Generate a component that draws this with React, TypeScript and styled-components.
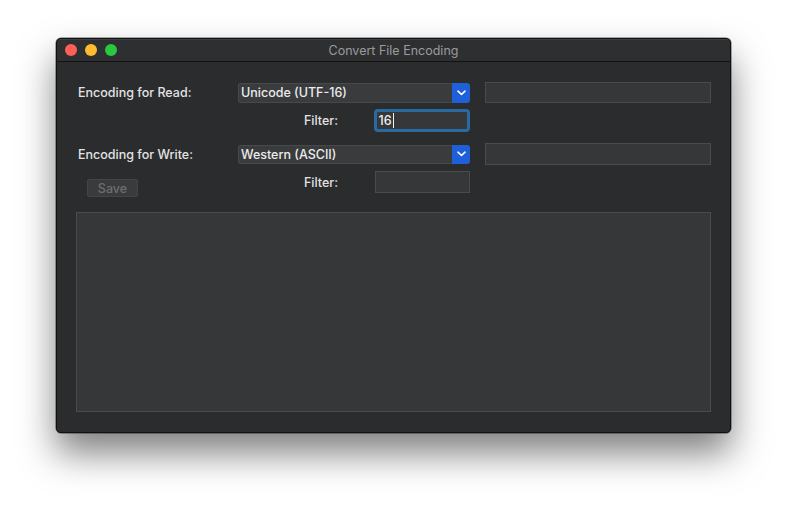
import React from "react";
import styled, { createGlobalStyle } from "styled-components";

const Global = createGlobalStyle`
  html, body { margin: 0; padding: 0; background: #ffffff; }
  body { font-family: Inter, "Liberation Sans", sans-serif; -webkit-font-smoothing: antialiased; }
`;

const Page = styled.div`
  width: 787px;
  height: 507px;
  padding: 38px 0 0 56px;
  box-sizing: border-box;
`;

const Window = styled.div`
  width: 675px;
  height: 395px;
  background: #2b2c2e;
  border-radius: 5px;
  border: 1px solid #111;
  box-sizing: border-box;
  box-shadow: 0 20px 36px rgba(0, 0, 0, 0.5), 0 0 0 0.5px rgba(0, 0, 0, 0.6);
  display: flex;
  flex-direction: column;
  overflow: hidden;
`;

const TitleBar = styled.div`
  height: 22px;
  flex: none;
  position: relative;
  display: flex;
  align-items: center;
  justify-content: center;
  background: #2e2f31;
  border-bottom: 1px solid #121212;
  box-shadow: inset 0 1px 0 rgba(255, 255, 255, 0.08);
`;

const Lights = styled.div`
  position: absolute;
  left: 8px;
  top: 5px;
  display: flex;
  gap: 8px;
`;

const Light = styled.span<{ $c: string }>`
  width: 12px;
  height: 12px;
  border-radius: 50%;
  background: ${(p) => p.$c};
`;

const Title = styled.div`
  font-size: 12.5px;
  color: #9b9b9c;
`;

const Content = styled.div`
  flex: 1;
  padding: 20px 19px 20px 19px;
  display: flex;
  flex-direction: column;
`;

const Grid = styled.div`
  display: grid;
  grid-template-columns: 162px 232px 15px 226px;
  align-items: center;
`;

const Label = styled.div`
  font-size: 12.5px;
  font-weight: 500;
  color: #e2e2e2;
  padding-left: 2px;
`;

const Popup = styled.div<{ $h: number }>`
  height: ${(p) => p.$h}px;
  display: flex;
  border-radius: 3px;
  overflow: hidden;
  background: #3a3b3d;
  box-shadow: inset 0 0 0 1px #48494b;
`;

const PopupText = styled.div`
  flex: 1;
  font-size: 12.5px;
  font-weight: 500;
  color: #ececec;
  padding-left: 3px;
  display: flex;
  align-items: center;
`;

const PopupArrow = styled.div`
  width: 18px;
  background: #1f5fd9;
  display: flex;
  align-items: center;
  justify-content: center;
  border-radius: 0 3px 3px 0;
`;

const Field = styled.div<{ $h: number; $w?: number }>`
  height: ${(p) => p.$h}px;
  ${(p) => (p.$w ? `width: ${p.$w}px;` : "")}
  box-sizing: border-box;
  background: #363739;
  border: 1px solid #4a4b4d;
`;

const FocusField = styled.div`
  width: 97px;
  height: 23px;
  box-sizing: border-box;
  background: #363739;
  border: 3px solid #2a6aa3;
  border-radius: 4px;
  display: flex;
  align-items: center;
  padding-left: 2px;
  font-size: 12.5px;
  font-weight: 500;
  color: #f0f0f0;
`;

const Caret = styled.span`
  display: inline-block;
  width: 1px;
  height: 15px;
  background: #f0f0f0;
  margin-left: 1px;
`;

const FilterRow = styled.div<{ $mt: number }>`
  grid-column: 2;
  display: flex;
  align-items: center;
  margin-top: ${(p) => p.$mt}px;
`;

const FilterLabel = styled.div<{ $w: number }>`
  width: ${(p) => p.$w}px;
  padding-left: 66px;
  box-sizing: border-box;
  font-size: 12.5px;
  font-weight: 500;
  color: #e2e2e2;
`;

const SaveCell = styled.div`
  grid-column: 1;
  align-self: start;
  margin: 14px 0 -4px;
  padding-left: 11px;
`;

const SaveButton = styled.div`
  width: 51px;
  height: 18px;
  border-radius: 3px;
  background: #3a3b3d;
  box-shadow: inset 0 0 0 1px #444547;
  color: #6d6e70;
  font-size: 12.5px;
  font-weight: 500;
  display: flex;
  align-items: center;
  justify-content: center;
`;

const Cell = styled.div<{ $mt?: number; $col?: number }>`
  ${(p) => (p.$col ? `grid-column: ${p.$col};` : "")}
  margin-top: ${(p) => p.$mt ?? 0}px;
`;

const TextArea = styled.div`
  margin-top: 19px;
  flex: 1;
  background: #363739;
  border: 1px solid #4a4b4d;
`;

const Chevron = () => (
  <svg width="9" height="6" viewBox="0 0 9 6">
    <path d="M1 1.2 L4.5 4.5 L8 1.2" fill="none" stroke="#ffffff" strokeWidth="1.6" strokeLinecap="round" strokeLinejoin="round" />
  </svg>
);

export default function App() {
  return (
    <>
      <Global />
      <Page>
        <Window>
          <TitleBar>
            <Lights>
              <Light $c="#fe5f57" />
              <Light $c="#febc2e" />
              <Light $c="#28c840" />
            </Lights>
            <Title>Convert File Encoding</Title>
          </TitleBar>
          <Content>
            <Grid>
              <Label>Encoding for Read:</Label>
              <Popup $h={20}>
                <PopupText>Unicode (UTF-16)</PopupText>
                <PopupArrow>
                  <Chevron />
                </PopupArrow>
              </Popup>
              <span />
              <Field $h={21} />

              <FilterRow $mt={6}>
                <FilterLabel $w={136}>Filter:</FilterLabel>
                <FocusField>
                  16<Caret />
                </FocusField>
              </FilterRow>

              <Cell $col={1} $mt={11}>
                <Label>Encoding for Write:</Label>
              </Cell>
              <Cell $col={2} $mt={11}>
                <Popup $h={19}>
                  <PopupText>Western (ASCII)</PopupText>
                  <PopupArrow>
                    <Chevron />
                  </PopupArrow>
                </Popup>
              </Cell>
              <span />
              <Cell $col={4} $mt={11}>
                <Field $h={22} />
              </Cell>

              <SaveCell>
                <SaveButton>Save</SaveButton>
              </SaveCell>
              <FilterRow $mt={6}>
                <FilterLabel $w={137}>Filter:</FilterLabel>
                <Field $h={22} $w={96} />
              </FilterRow>
            </Grid>
            <TextArea />
          </Content>
        </Window>
      </Page>
    </>
  );
}
